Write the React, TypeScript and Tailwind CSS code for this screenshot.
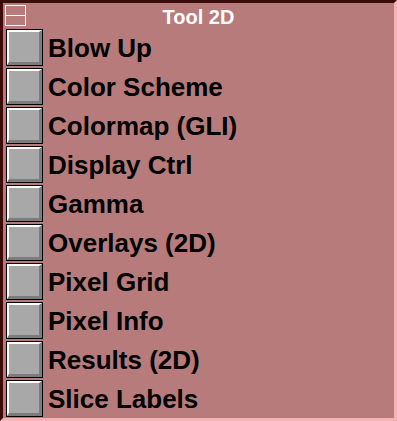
import React from "react";

const items = [
  "Blow Up",
  "Color Scheme",
  "Colormap (GLI)",
  "Display Ctrl",
  "Gamma",
  "Overlays (2D)",
  "Pixel Grid",
  "Pixel Info",
  "Results (2D)",
  "Slice Labels",
];

function BevelButton() {
  return (
    <div className="w-[37px] h-[37px] border border-black bg-[#a8a8a8] shrink-0">
      <div className="w-full h-full border-t-2 border-l-2 border-t-white border-l-white border-b-[3px] border-r-[3px] border-b-[#7c7c7c] border-r-[#7c7c7c] bg-[#a8a8a8]" />
    </div>
  );
}

export default function App() {
  return (
    <div
      className="w-[397px] h-[421px] bg-[#b77b7b] border-[3px] border-t-[#3a0c0c] border-l-[#3a0c0c] border-b-[#f4b4b4] border-r-[#f4b4b4] flex flex-col"
      style={{ fontFamily: '"Liberation Sans", Arial, sans-serif' }}
    >
      <div className="relative h-[25px] flex items-center justify-center shrink-0 pt-[3px]">
        <div className="absolute left-[2px] top-[2px] w-[21px] h-[21px] border border-white flex items-center">
          <div className="w-full h-px bg-white" />
        </div>
        <span className="text-white font-bold text-[20px] leading-none">Tool 2D</span>
      </div>
      <div className="flex flex-col pl-[3px]">
        {items.map((t) => (
          <div key={t} className="h-[39px] flex items-center gap-[5px]">
            <BevelButton />
            <span className="text-black font-bold text-[26px] leading-none">{t}</span>
          </div>
        ))}
      </div>
    </div>
  );
}
